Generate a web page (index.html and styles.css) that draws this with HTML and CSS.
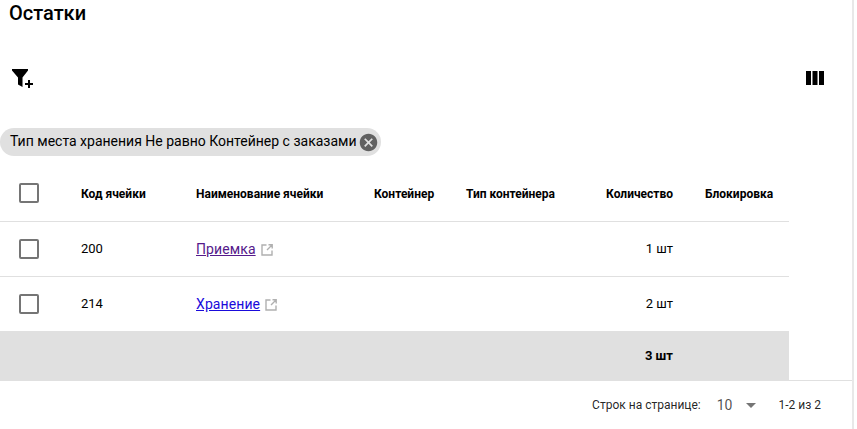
FILE: index.html
```html
<!DOCTYPE html>
<html lang="ru">
<head>
<meta charset="utf-8">
<title>Остатки</title>
<link rel="stylesheet" href="styles.css">
</head>
<body>
<div class="page">
  <h1 class="title">Остатки</h1>
  <div class="toolbar">
    <svg class="filter-icon" viewBox="0 0 24 24" width="24" height="24"><path d="M1 3h16v1.500L11.500 11.500V21L7 18.500v-7L1 4.500z"/><path d="M17 14h2v3h3v2h-3v3h-2v-3h-3v-2h3z"/></svg>
    <svg class="columns-icon" viewBox="0 0 18 14" width="18" height="14"><path d="M0 0h5v14H0zM6.500 0h5v14h-5zM13 0h5v14h-5z"/></svg>
  </div>
  <div class="chips">
    <div class="chip">
      <span class="chip-text">Тип места хранения Не равно Контейнер с заказами</span>
      <svg class="chip-x" viewBox="0 0 24 24" width="21" height="21"><path d="M12 2C6.470 2 2 6.470 2 12s4.470 10 10 10 10-4.470 10-10S17.530 2 12 2zm5 13.590L15.590 17 12 13.410 8.410 17 7 15.590 10.590 12 7 8.410 8.410 7 12 10.590 15.590 7 17 8.410 13.410 12 17 15.590z"/></svg>
    </div>
  </div>
  <table class="grid">
    <colgroup>
      <col class="c-check"><col class="c-code"><col class="c-name"><col class="c-cont"><col class="c-type"><col class="c-qty"><col class="c-lock">
    </colgroup>
    <thead>
      <tr>
        <th><span class="box"></span></th>
        <th>Код ячейки</th>
        <th>Наименование ячейки</th>
        <th>Контейнер</th>
        <th>Тип контейнера</th>
        <th class="num">Количество</th>
        <th>Блокировка</th>
      </tr>
    </thead>
    <tbody>
      <tr>
        <td><span class="box"></span></td>
        <td>200</td>
        <td class="name"><a class="visited" href="#">Приемка</a><svg class="ext" viewBox="0 0 12 12" width="12" height="12"><path d="M5.500 1H1v10h10V6.500M6 6l5-5M7.500 .8h3.700v3.700" /></svg></td>
        <td></td><td></td>
        <td class="num">1 шт</td>
        <td></td>
      </tr>
      <tr>
        <td><span class="box"></span></td>
        <td>214</td>
        <td class="name"><a class="link" href="#">Хранение</a><svg class="ext" viewBox="0 0 12 12" width="12" height="12"><path d="M5.500 1H1v10h10V6.500M6 6l5-5M7.500 .8h3.700v3.700" /></svg></td>
        <td></td><td></td>
        <td class="num">2 шт</td>
        <td></td>
      </tr>
    </tbody>
    <tfoot>
      <tr>
        <td colspan="5"></td>
        <td class="num">3 шт</td>
        <td></td>
      </tr>
    </tfoot>
  </table>
  <div class="pager">
    <span class="pager-label">Строк на странице:</span>
    <span class="pager-size">10</span>
    <svg class="pager-arrow" viewBox="0 0 10 5" width="10" height="5"><path d="M0 0h10L5 5z"/></svg>
    <span class="pager-range">1-2 из 2</span>
  </div>
</div>
</body>
</html>
```
FILE: styles.css
```css
* { box-sizing: border-box; }
html, body { margin: 0; height: 100%; background: #fff; }
body { font-family: Roboto, "Noto Sans", sans-serif; color: #000; overflow: hidden; }
.page { width: 854px; height: 429px; border-right: 2px solid #e8e8e8; }
.title { margin: 0; padding: 2px 0 0 9px; height: 59px; font-size: 20px; line-height: 23px; font-weight: 500; }
.toolbar { height: 38px; display: flex; align-items: center; justify-content: space-between; padding: 0 28px 0 11px; }
.filter-icon { display: block; width: 24px; height: 24px; fill: #000; }
.columns-icon { display: block; fill: #000; }
.chips { height: 69px; padding-top: 31px; }
.chip { display: inline-flex; align-items: center; height: 28px; border-radius: 14px; background: #e0e0e0; padding: 0 2px 0 10px; font-size: 14px; gap: 1px; white-space: nowrap; }
.chip-text { padding-bottom: 2px; }
.chip-x { fill: #616161; display: block; }
.grid { width: 789px; border-collapse: collapse; table-layout: fixed; }
.c-check { width: 65px; } .c-code { width: 115px; } .c-name { width: 178px; } .c-cont { width: 92px; } .c-type { width: 112px; } .c-qty { width: 127px; } .c-lock { width: 100px; }
.grid th { height: 55px; font-size: 12px; font-weight: 700; text-align: left; padding: 2px 0 0 16px; border-bottom: 1px solid #e0e0e0; white-space: nowrap; }
.grid th:first-child { padding-top: 0; }
.grid td { height: 55px; font-size: 13px; padding: 0 0 0 16px; border-bottom: 1px solid #e0e0e0; }
.grid th.num, .grid td.num { text-align: right; padding-right: 16px; padding-left: 0; }
.grid tfoot td { height: 49px; background: #e0e0e0; font-weight: 700; border-bottom: 0; }
.grid tbody tr:last-child td { border-bottom: 0; }
.box { display: block; width: 20px; height: 20px; border: 2px solid #757575; border-radius: 2px; margin-left: 3px; }
.name a { font-size: 14px; letter-spacing: .1px; }
.visited { color: #551a8b; }
.link { color: #1a0bdb; }
.ext { margin-left: 5px; vertical-align: -2px; fill: none; stroke: #b0b0b0; stroke-width: 1.400; }
.pager { border-top: 1px solid #e0e0e0; height: 49px; display: flex; align-items: center; justify-content: flex-end; padding: 0 31px 0 0; font-size: 12px; color: rgba(0,0,0,.87); }
.pager-size { font-size: 14px; margin-left: 16px; color: rgba(0,0,0,.7); }
.pager-arrow { margin-left: 14px; fill: #757575; }
.pager-range { margin-left: 22px; }
```
